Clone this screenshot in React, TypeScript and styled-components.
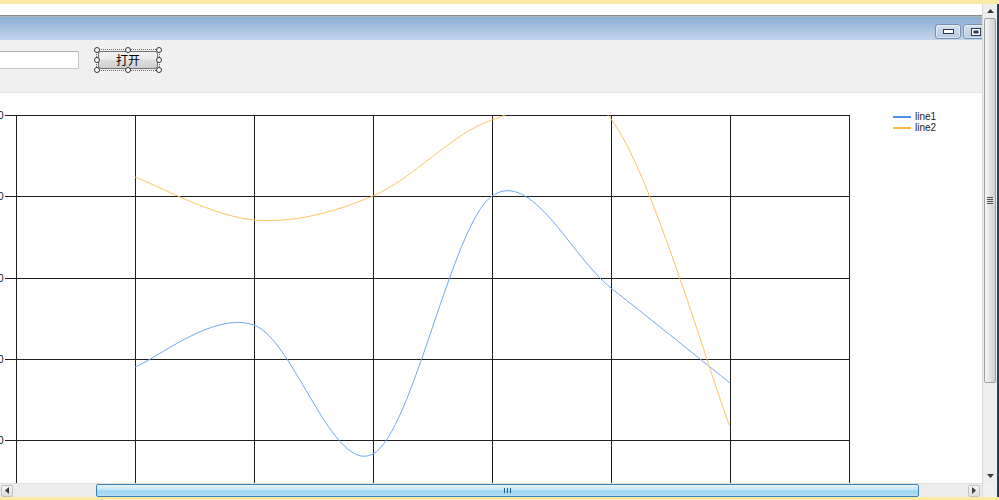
import React from 'react';
import styled, { createGlobalStyle } from 'styled-components';

const GlobalStyle = createGlobalStyle`
  html, body {
    margin: 0;
    padding: 0;
    background: #ffffff;
  }
  body {
    font-family: 'Liberation Sans', Arial, sans-serif;
  }
`;

// chart geometry, in the chart svg's own coordinates
const PLOT_LEFT = 16;
const PLOT_TOP = 22;
const COL_STEP = 119;
const ROW_STEP = 81.25;
const COLS = 8;
const ROWS = 5;
const PLOT_RIGHT = PLOT_LEFT + COL_STEP * (COLS - 1);

type Pt = [number, number];

const line1: Pt[] = [
  [135, 274],
  [254, 232],
  [373, 361],
  [492, 103],
  [611, 195],
  [730, 290],
];

const line2: Pt[] = [
  [135, 84],
  [254, 127],
  [373, 103],
  [492, 27],
  [611, 26],
  [730, 334],
];

const yLabels = ['100', '80', '60', '40', '20'];

// cardinal spline, tension 0.5 like GDI+ DrawCurve
const splinePath = (pts: Pt[], tension = 0.5) => {
  let d = `M${pts[0][0]},${pts[0][1]}`;
  for (let i = 0; i < pts.length - 1; i++) {
    const p0 = pts[i - 1] ?? pts[i];
    const p1 = pts[i];
    const p2 = pts[i + 1];
    const p3 = pts[i + 2] ?? pts[i + 1];
    const k = tension / 3;
    const c1: Pt = [p1[0] + (p2[0] - p0[0]) * k, p1[1] + (p2[1] - p0[1]) * k];
    const c2: Pt = [p2[0] - (p3[0] - p1[0]) * k, p2[1] - (p3[1] - p1[1]) * k];
    d += ` C${c1[0].toFixed(1)},${c1[1].toFixed(1)} ${c2[0].toFixed(1)},${c2[1].toFixed(1)} ${p2[0]},${p2[1]}`;
  }
  return d;
};

const Page = styled.div`
  width: 999px;
  height: 500px;
  display: flex;
  flex-direction: column;
  overflow: hidden;
  background: #ffffff;
`;

const InfoStrip = styled.div<{ $h: number }>`
  height: ${p => p.$h}px;
  flex: none;
  background: #fde9a6;
`;

const Main = styled.div`
  flex: 1;
  display: flex;
  min-height: 0;
`;

const LeftCol = styled.div`
  width: 982px;
  flex: none;
  display: flex;
  flex-direction: column;
`;

const Viewport = styled.div`
  flex: 1;
  overflow: hidden;
  background: #ffffff;
  padding-top: 11px;
  min-height: 0;
`;

const Form = styled.div`
  width: 1040px;
  height: 100%;
  display: flex;
  flex-direction: column;
  border-top: 1px solid #8a8a8a;
  box-shadow: inset 0 1px 0 #b4b4b4;
`;

const TitleBar = styled.div`
  height: 23px;
  margin-top: 1px;
  flex: none;
  display: flex;
  align-items: flex-start;
  justify-content: flex-end;
  gap: 2px;
  padding: 7px 6px 0 0;
  box-sizing: border-box;
  background: linear-gradient(#8cadd3, #c2d6ec);
`;

const CaptionButton = styled.div<{ $w: number }>`
  width: ${p => p.$w}px;
  height: 15px;
  box-sizing: border-box;
  border: 1px solid #7890b0;
  border-radius: 3px;
  background: linear-gradient(#d4e1f0, #b6cbe4);
  box-shadow: inset 0 0 0 1px rgba(255, 255, 255, 0.45);
  display: flex;
  align-items: center;
  justify-content: center;
`;

const ClientArea = styled.div`
  height: 53px;
  flex: none;
  box-sizing: border-box;
  background: #f0f0f0;
  border-bottom: 1px solid #e2e2e2;
  display: flex;
  align-items: flex-start;
  padding-top: 9px;
`;

const TextBox = styled.div`
  width: 79px;
  height: 18px;
  margin-top: 2px;
  box-sizing: border-box;
  background: #ffffff;
  border: 1px solid #c4c7cc;
  border-left: none;
  border-top-color: #abadb3;
`;

const Selection = styled.div`
  position: relative;
  width: 64px;
  height: 22px;
  margin-left: 17px;
  box-sizing: border-box;
  border: 1px dotted #6a6a6a;
  display: flex;
  align-items: center;
  justify-content: center;
`;

const WinButton = styled.div`
  width: 60px;
  height: 18px;
  box-sizing: border-box;
  border: 1px solid #707070;
  border-radius: 3px;
  background: linear-gradient(#f2f2f2 0%, #ebebeb 45%, #dddddd 50%, #cfcfcf 100%);
  display: flex;
  align-items: center;
  justify-content: center;
  font-family: 'Noto Sans CJK SC', 'Liberation Sans', sans-serif;
  font-size: 12px;
  color: #000000;
  line-height: 1;
`;

const Handle = styled.div<{ $x: number; $y: number }>`
  position: absolute;
  left: ${p => p.$x}%;
  top: ${p => p.$y}%;
  width: 6px;
  height: 6px;
  margin: -3px 0 0 -3px;
  box-sizing: border-box;
  border: 1px solid #333333;
  border-radius: 50%;
  background: #ffffff;
`;

const ChartArea = styled.div`
  flex: 1;
  background: #ffffff;
  display: flex;
  align-items: flex-start;
  min-height: 0;
`;

const Plot = styled.svg`
  flex: none;
  display: block;
`;

const Legend = styled.div`
  margin-left: 33px;
  padding-top: 18px;
  display: flex;
  flex-direction: column;
`;

const LegendRow = styled.div`
  display: flex;
  align-items: center;
  height: 11px;
  gap: 4px;
  font-size: 10px;
  color: #1a1a1a;
`;

const Swatch = styled.div<{ $color: string }>`
  width: 18px;
  height: 2px;
  background: ${p => p.$color};
`;

const HScroll = styled.div`
  height: 14px;
  flex: none;
  display: flex;
  align-items: center;
  background: #ececec;
  border-top: 1px solid #e0e0e0;
  box-sizing: border-box;
`;

const ArrowButton = styled.div<{ $auto?: boolean }>`
  width: 12px;
  height: 12px;
  box-sizing: border-box;
  margin-left: ${p => (p.$auto ? 'auto' : '1px')};
  margin-right: ${p => (p.$auto ? '2px' : '0')};
  border: 1px solid #c2c2c2;
  border-radius: 2px;
  background: linear-gradient(#f6f6f6, #dcdcdc);
  display: flex;
  align-items: center;
  justify-content: center;
`;

const HThumb = styled.div<{ $start: number; $size: number }>`
  margin-left: ${p => p.$start}px;
  width: ${p => p.$size}px;
  height: 13px;
  box-sizing: border-box;
  border: 1px solid #3c7fb1;
  border-radius: 2px;
  background: linear-gradient(#e5f4fc 0%, #c4e5f6 45%, #98d1ef 55%, #b6dff4 100%);
  display: flex;
  align-items: center;
  justify-content: center;
`;

const RightCol = styled.div`
  width: 14px;
  flex: none;
  display: flex;
  flex-direction: column;
  background: #eeeeee;
  border-left: 1px solid #dadada;
`;

const VScroll = styled.div`
  flex: 1;
  display: flex;
  flex-direction: column;
  align-items: center;
  min-height: 0;
`;

const VArrow = styled.div`
  height: 14px;
  flex: none;
  width: 100%;
  display: flex;
  align-items: center;
  justify-content: center;
`;

const VThumb = styled.div<{ $size: number }>`
  width: 12px;
  height: ${p => p.$size}px;
  flex: none;
  box-sizing: border-box;
  border: 1px solid #a0a0a0;
  border-radius: 2px;
  background: linear-gradient(90deg, #f6f6f6, #e4e4e4 50%, #cfcfcf);
  display: flex;
  flex-direction: column;
  align-items: center;
  padding-top: 178px;
  gap: 1px;
`;

const TrackFill = styled.div`
  flex: 1;
`;

const GripLine = styled.div`
  width: 6px;
  height: 1px;
  background: #4d4d4d;
`;

const Corner = styled.div`
  height: 14px;
  flex: none;
  background: #f0f0f0;
`;

const DarkEdge = styled.div`
  flex: 1;
  background: #2c3d5b;
`;

const Triangle = ({ dir }: { dir: 'up' | 'down' | 'left' | 'right' }) => {
  const pts = {
    up: '0,4 3.5,0 7,4',
    down: '0,0 7,0 3.5,4',
    left: '4,0 4,7 0,3.5',
    right: '0,0 0,7 4,3.5',
  }[dir];
  const vertical = dir === 'up' || dir === 'down';
  return (
    <svg width={vertical ? 7 : 4} height={vertical ? 4 : 7}>
      <polygon points={pts} fill="#3a3a3a" />
    </svg>
  );
};

const Chart = () => {
  const w = 860;
  const h = 390;
  const rowsY = Array.from({ length: ROWS }, (_, i) => Math.round(PLOT_TOP + i * ROW_STEP) + 0.5);
  const colsX = Array.from({ length: COLS }, (_, i) => PLOT_LEFT + i * COL_STEP + 0.5);
  return (
    <Plot width={w} height={h} viewBox={`0 0 ${w} ${h}`}>
      <defs>
        <clipPath id="plotClip">
          <rect x={PLOT_LEFT} y={PLOT_TOP} width={PLOT_RIGHT - PLOT_LEFT} height={h - PLOT_TOP} />
        </clipPath>
      </defs>
      {rowsY.map((y, i) => (
        <g key={y}>
          <line x1={5} x2={PLOT_RIGHT + 0.5} y1={y} y2={y} stroke="#1e1e1e" strokeWidth={1} />
          <text
            x={3.5}
            y={y + 3.5}
            textAnchor="end"
            fontSize={10}
            fontFamily="'Liberation Sans', Arial, sans-serif"
            fill="#111"
          >
            {yLabels[i]}
          </text>
        </g>
      ))}
      {colsX.map(x => (
        <line key={x} x1={x} x2={x} y1={PLOT_TOP} y2={h} stroke="#1e1e1e" strokeWidth={1} />
      ))}
      <g clipPath="url(#plotClip)" fill="none" strokeWidth={1}>
        <path d={splinePath(line1)} stroke="#6ea8f2" />
        <path d={splinePath(line2)} stroke="#fcc462" />
      </g>
    </Plot>
  );
};

const handles: [number, number][] = [
  [0, 0], [50, 0], [100, 0],
  [0, 50], [100, 50],
  [0, 100], [50, 100], [100, 100],
];

export default function App() {
  return (
    <Page>
      <GlobalStyle />
      <InfoStrip $h={4} />
      <Main>
        <LeftCol>
          <Viewport>
            <Form>
              <TitleBar>
                <CaptionButton $w={26}>
                  <svg width="11" height="5">
                    <rect x="0.5" y="0.5" width="10" height="4" fill="#ffffff" stroke="#2b3a52" />
                  </svg>
                </CaptionButton>
                <CaptionButton $w={26}>
                  <svg width="10" height="8">
                    <rect x="0.5" y="0.5" width="9" height="7" fill="#ffffff" stroke="#2b3a52" />
                    <rect x="2.5" y="2.5" width="5" height="3" fill="#2b3a52" />
                  </svg>
                </CaptionButton>
                <CaptionButton $w={43} />
              </TitleBar>
              <ClientArea>
                <TextBox />
                <Selection>
                  <WinButton>打开</WinButton>
                  {handles.map(([x, y]) => (
                    <Handle key={`${x}-${y}`} $x={x} $y={y} />
                  ))}
                </Selection>
              </ClientArea>
              <ChartArea>
                <Chart />
                <Legend>
                  <LegendRow>
                    <Swatch $color="#4a8ff0" />
                    line1
                  </LegendRow>
                  <LegendRow>
                    <Swatch $color="#fbb445" />
                    line2
                  </LegendRow>
                </Legend>
              </ChartArea>
            </Form>
          </Viewport>
          <HScroll>
            <ArrowButton>
              <Triangle dir="left" />
            </ArrowButton>
            <HThumb $start={83} $size={823}>
              <svg width="7" height="5">
                <rect x="0" y="0" width="1" height="5" fill="#1f5f8f" />
                <rect x="3" y="0" width="1" height="5" fill="#1f5f8f" />
                <rect x="6" y="0" width="1" height="5" fill="#1f5f8f" />
              </svg>
            </HThumb>
            <ArrowButton $auto>
              <Triangle dir="right" />
            </ArrowButton>
          </HScroll>
        </LeftCol>
        <RightCol>
          <VScroll>
            <VArrow>
              <Triangle dir="up" />
            </VArrow>
            <VThumb $size={365}>
              <GripLine />
              <GripLine />
              <GripLine />
              <GripLine />
            </VThumb>
            <TrackFill />
            <VArrow>
              <Triangle dir="down" />
            </VArrow>
          </VScroll>
          <Corner />
        </RightCol>
        <DarkEdge />
      </Main>
      <InfoStrip $h={3} />
    </Page>
  );
}
